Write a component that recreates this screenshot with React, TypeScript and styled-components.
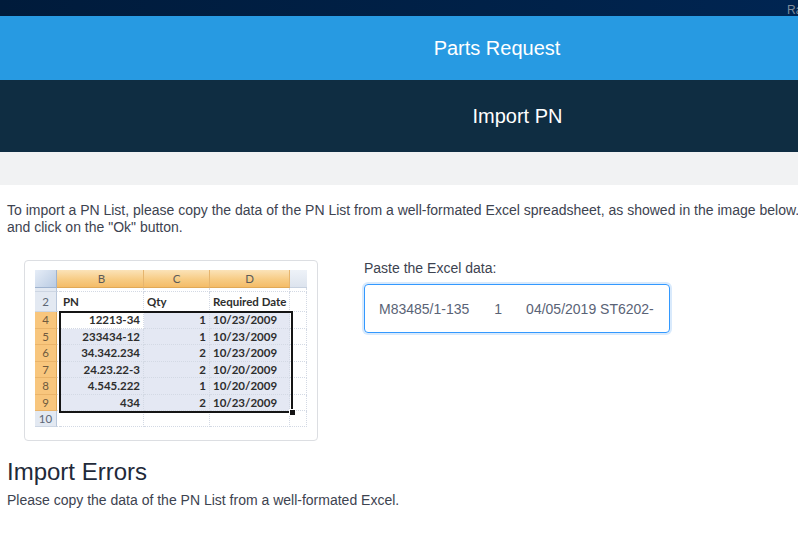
import React, { FC } from 'react';
import styled, { createGlobalStyle, css } from 'styled-components';

const GlobalStyle = createGlobalStyle`
  html, body {
    margin: 0;
    padding: 0;
    background: #fff;
    overflow: hidden;
  }
  body {
    font-family: 'Liberation Sans', Arial, sans-serif;
    color: #3d4350;
  }
`;

const Page = styled.div`
  width: 798px;
  min-height: 551px;
`;

const TopBar = styled.div`
  height: 16px;
  background: linear-gradient(90deg, #001b3b 0%, #00224a 70%, #002552 100%);
  padding-left: calc(100% - 11px);
  overflow: hidden;
  white-space: nowrap;
  color: #7f8c9b;
  font-size: 12px;
  line-height: 20px;
`;

const TitleBar = styled.div<{ $tone: 'blue' | 'dark'; $offset: number }>`
  display: flex;
  align-items: center;
  justify-content: center;
  padding-left: ${({ $offset }) => $offset}px;
  color: #fff;
  font-size: 20px;
  ${({ $tone }) => $tone === 'blue'
    ? css`
      height: 64px;
      background: #279ae2;
    `
    : css`
      height: 72px;
      background: #0f2d42;
    `}
`;

const Band = styled.div`
  height: 33px;
  background: #f1f2f3;
`;

const Content = styled.div`
  padding: 17px 0 0 7px;
`;

const Intro = styled.p`
  margin: 0;
  font-size: 14px;
  line-height: 17px;
  white-space: nowrap;
  color: #3d4350;
`;

const Row = styled.div`
  display: flex;
  align-items: flex-start;
  gap: 46px;
  margin: 24px 0 0 17px;
`;

const ImageCard = styled.div`
  width: 272px;
  padding: 9px 10px 13px 10px;
  border: 1px solid #dcdee2;
  border-radius: 4px;
`;

const Sheet = styled.div`
  position: relative;
  display: grid;
  grid-template-columns: 22px 3px 84px 66px 80px 17px;
  grid-template-rows: 18px 4px 20px repeat(6, 16.5px) 16px;
  font-family: Lato, 'Open Sans', sans-serif;
  font-size: 11.5px;
  font-weight: 700;
  color: #2e2e2e;
  overflow: hidden;
`;

type CellKind = 'corner' | 'colHead' | 'ghostHead' | 'rowHead' | 'rowHeadSel' | 'cell' | 'sel' | 'active';

const Cell = styled.div<{ $kind: CellKind; $align?: 'left' | 'right' | 'center' }>`
  display: flex;
  align-items: center;
  justify-content: ${({ $align }) => $align === 'right' ? 'flex-end' : $align === 'center' ? 'center' : 'flex-start'};
  padding: 0 3px;
  box-sizing: border-box;
  white-space: nowrap;
  overflow: hidden;
  border-right: 1px dotted #d3d9e4;
  border-bottom: 1px dotted #d3d9e4;
  background: #fff;

  ${({ $kind }) => {
    switch ($kind) {
      case 'corner':
        return css`
          background: linear-gradient(135deg, #e6edf7, #b9cbe3);
          border-right: 1px solid #9fb3cf;
          border-bottom: 1px solid #9fb3cf;
        `;
      case 'colHead':
        return css`
          justify-content: center;
          background: linear-gradient(180deg, #fbe3b8 0%, #f7cc85 55%, #f4bc68 100%);
          border-right: 1px solid #e6b56e;
          border-bottom: 1px solid #e0a957;
          color: #5c5a58;
          font-weight: 400;
        `;
      case 'ghostHead':
        return css`
          background: linear-gradient(180deg, #eef2f8, #dde4ee);
          border-right: none;
          border-bottom: 1px solid #c7d1df;
        `;
      case 'rowHead':
        return css`
          justify-content: center;
          padding: 0;
          background: #e3e9f2;
          border-right: 1px solid #b9c7db;
          border-bottom: 1px solid #cdd6e3;
          color: #5d6775;
          font-weight: 400;
        `;
      case 'rowHeadSel':
        return css`
          justify-content: center;
          padding: 0;
          background: #f8c67d;
          border-right: 1px solid #e0a957;
          border-bottom: 1px solid #eab46a;
          color: #6f5a3e;
          font-weight: 400;
        `;
      case 'sel':
        return css`
          background: #e4e8f3;
        `;
      case 'active':
        return css`
          background: #fff;
        `;
      default:
        return '';
    }
  }}
`;

const Selection = styled.div`
  position: absolute;
  left: 24px;
  top: 41px;
  width: 230px;
  height: 98px;
  border: 2px solid #151515;
  pointer-events: none;

  &::after {
    content: '';
    position: absolute;
    right: -5px;
    bottom: -5px;
    width: 5px;
    height: 5px;
    background: #151515;
    border: 1px solid #fff;
  }
`;

const Side = styled.div`
  display: flex;
  flex-direction: column;
  gap: 7px;
`;

const Label = styled.div`
  font-size: 14px;
  line-height: 17px;
  color: #3d4350;
`;

const PasteBox = styled.div`
  display: flex;
  align-items: center;
  width: 306px;
  height: 49px;
  box-sizing: border-box;
  padding: 0 14px;
  border: 1px solid #3399ff;
  border-radius: 4px;
  box-shadow: 0 0 0 2px rgba(45, 140, 240, 0.18);
  color: #5a6376;
  font-size: 14px;
  white-space: nowrap;
  overflow: hidden;
`;

const Field = styled.span<{ $gap?: number }>`
  margin-left: ${({ $gap }) => $gap || 0}px;
`;

const ErrorsTitle = styled.h2`
  margin: 16px 0 0 0;
  font-size: 24px;
  font-weight: 400;
  line-height: 29px;
  color: #1f2a3a;
`;

const ErrorText = styled.p`
  margin: 6px 0 0 0;
  font-size: 14px;
  line-height: 17px;
  color: #3d4350;
`;

const rows = [
  ['4', '12213-34', '1', '10/23/2009'],
  ['5', '233434-12', '1', '10/23/2009'],
  ['6', '34.342.234', '2', '10/23/2009'],
  ['7', '24.23.22-3', '2', '10/20/2009'],
  ['8', '4.545.222', '1', '10/20/2009'],
  ['9', '434', '2', '10/23/2009'],
];

const ExcelSample: FC = () => (
  <Sheet>
    <Cell $kind="corner" />
    <Cell $kind="colHead" />
    <Cell $kind="colHead">B</Cell>
    <Cell $kind="colHead">C</Cell>
    <Cell $kind="colHead">D</Cell>
    <Cell $kind="ghostHead" />

    <Cell $kind="rowHead" />
    <Cell $kind="cell" />
    <Cell $kind="cell" />
    <Cell $kind="cell" />
    <Cell $kind="cell" />
    <Cell $kind="cell" />

    <Cell $kind="rowHead">2</Cell>
    <Cell $kind="cell" />
    <Cell $kind="cell">PN</Cell>
    <Cell $kind="cell">Qty</Cell>
    <Cell $kind="cell">Required Date</Cell>
    <Cell $kind="cell" />

    {rows.map(([n, pn, qty, date], i) => (
      <React.Fragment key={n}>
        <Cell $kind="rowHeadSel">{n}</Cell>
        <Cell $kind="cell" />
        <Cell $kind={i === 0 ? 'active' : 'sel'} $align="right">{pn}</Cell>
        <Cell $kind="sel" $align="right">{qty}</Cell>
        <Cell $kind="sel">{date}</Cell>
        <Cell $kind="cell" />
      </React.Fragment>
    ))}

    <Cell $kind="rowHead">10</Cell>
    <Cell $kind="cell" />
    <Cell $kind="cell" />
    <Cell $kind="cell" />
    <Cell $kind="cell" />
    <Cell $kind="cell" />

    <Selection />
  </Sheet>
);

const App: FC = () => (
  <Page>
    <GlobalStyle />
    <TopBar>Rafael</TopBar>
    <TitleBar $tone="blue" $offset={196}>Parts Request</TitleBar>
    <TitleBar $tone="dark" $offset={237}>Import PN</TitleBar>
    <Band />
    <Content>
      <Intro>
        To import a PN List, please copy the data of the PN List from a well-formated Excel spreadsheet, as showed in the image below.
        <br />
        and click on the "Ok" button.
      </Intro>
      <Row>
        <ImageCard>
          <ExcelSample />
        </ImageCard>
        <Side>
          <Label>Paste the Excel data:</Label>
          <PasteBox>
            <Field>M83485/1-135</Field>
            <Field $gap={25}>1</Field>
            <Field $gap={24}>04/05/2019 ST6202-</Field>
          </PasteBox>
        </Side>
      </Row>
      <ErrorsTitle>Import Errors</ErrorsTitle>
      <ErrorText>Please copy the data of the PN List from a well-formated Excel.</ErrorText>
    </Content>
  </Page>
);

export default App;
